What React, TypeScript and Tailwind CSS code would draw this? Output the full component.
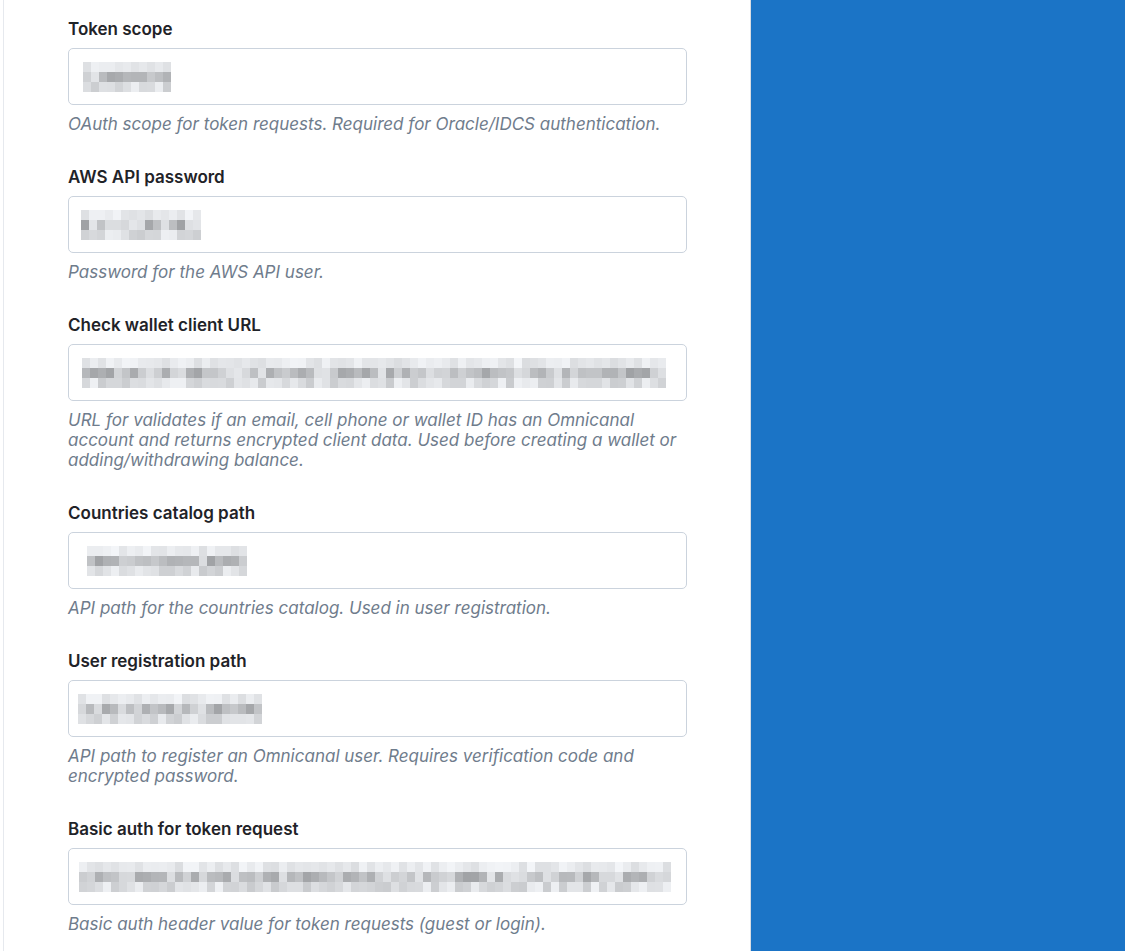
import type { CSSProperties } from "react";

type Field = {
  label: string;
  help: string;
  blurStart: number; // offset of the masked value from the input's left edge
  blurWidth: number;
  seed: number;
};

const fields: Field[] = [
  {
    label: "Token scope",
    help: "OAuth scope for token requests. Required for Oracle/IDCS authentication.",
    blurStart: 14,
    blurWidth: 90,
    seed: 3,
  },
  {
    label: "AWS API password",
    help: "Password for the AWS API user.",
    blurStart: 12,
    blurWidth: 120,
    seed: 11,
  },
  {
    label: "Check wallet client URL",
    help: "URL for validates if an email, cell phone or wallet ID has an Omnicanal account and returns encrypted client data. Used before creating a wallet or adding/withdrawing balance.",
    blurStart: 13,
    blurWidth: 591,
    seed: 7,
  },
  {
    label: "Countries catalog path",
    help: "API path for the countries catalog. Used in user registration.",
    blurStart: 18,
    blurWidth: 162,
    seed: 19,
  },
  {
    label: "User registration path",
    help: "API path to register an Omnicanal user. Requires verification code and encrypted password.",
    blurStart: 9,
    blurWidth: 184,
    seed: 23,
  },
  {
    label: "Basic auth for token request",
    help: "Basic auth header value for token requests (guest or login).",
    blurStart: 10,
    blurWidth: 594,
    seed: 31,
  },
];

// cheap deterministic noise so the masked values look pixelated
function noise(seed: number, i: number) {
  const x = Math.sin(seed * 97.13 + i * 12.9898) * 43758.5453;
  return x - Math.floor(x);
}

function MaskedValue({ start, width, seed }: { start: number; width: number; seed: number }) {
  const cell = 8;
  const cols = Math.floor(width / cell);
  const rows = [0.35, 1, 0.55];
  return (
    <div className="flex flex-col" style={{ marginLeft: start }}>
      {rows.map((strength, r) => (
        <div key={r} className="flex">
          {Array.from({ length: cols }).map((_, c) => {
            const n = noise(seed + r * 5, c);
            const shade = Math.round(250 - strength * (20 + n * 70));
            const style: CSSProperties = {
              width: cell,
              height: 10,
              backgroundColor: `rgb(${shade}, ${shade + 2}, ${shade + 5})`,
            };
            return <span key={c} style={style} />;
          })}
        </div>
      ))}
    </div>
  );
}

function SettingField({ field }: { field: Field }) {
  return (
    <div className="flex flex-col">
      <label className="text-[17px] leading-6 font-semibold text-[#1f2328]">{field.label}</label>
      <div className="mt-[7px] flex h-[57px] w-[619px] items-center rounded-[5px] border border-[#cbd3dd] bg-white">
        <MaskedValue start={field.blurStart} width={field.blurWidth} seed={field.seed} />
      </div>
      <p className="mt-[9px] w-[620px] text-[17px] leading-5 text-[#6f7c8c] italic">{field.help}</p>
    </div>
  );
}

export default function App() {
  return (
    <div className="flex h-[951px] overflow-hidden bg-white" style={{ fontFamily: "Inter, 'Noto Sans', sans-serif" }}>
      <div className="flex w-[751px] shrink-0 pl-[3px]">
        <main className="flex flex-1 flex-col gap-[31px] border-l border-r border-l-[#e6e9ee] border-r-[#d9dde3] pt-[17px] pl-16">
          {fields.map((f) => (
            <SettingField key={f.label} field={f} />
          ))}
        </main>
      </div>
      <aside className="flex-1 bg-[#1b74c6]" />
    </div>
  );
}
